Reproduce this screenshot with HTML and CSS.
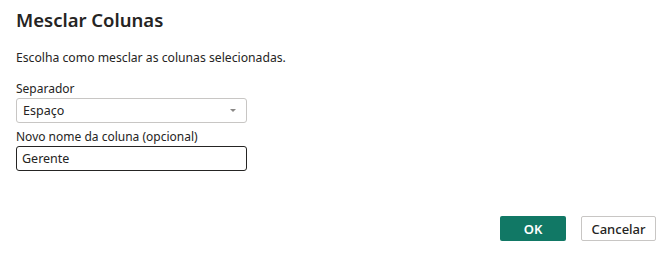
FILE: index.html
```html
<!DOCTYPE html>
<html lang="pt">
<head>
    <meta charset="UTF-8">
    <title>Mesclar Colunas</title>
    <link rel="stylesheet" href="styles.css">
</head>
<body>
    <div class="dialog">
        <h1>Mesclar Colunas</h1>
        <p class="desc">Escolha como mesclar as colunas selecionadas.</p>

        <div class="field">
            <label>Separador</label>
            <div class="select">
                <span>Espaço</span>
                <span class="caret"></span>
            </div>
        </div>

        <div class="field">
            <label>Novo nome da coluna (opcional)</label>
            <div class="input">Gerente</div>
        </div>

        <div class="footer">
            <button class="btn-ok">OK</button>
            <button class="btn-cancel">Cancelar</button>
        </div>
    </div>
</body>
</html>
```

FILE: styles.css
```css
body {
    margin: 0;
    background: #fff;
    font-family: 'Noto Sans', 'Open Sans', sans-serif;
    color: #252423;
}

.dialog {
    width: 660px;
    height: 257px;
    box-sizing: border-box;
    padding: 6px 4px 0 16px;
    display: flex;
    flex-direction: column;
}

h1 {
    margin: 0;
    font-size: 18.5px;
    font-weight: 600;
    line-height: 28px;
    color: #252423;
}

.desc {
    margin: 16px 0 0;
    font-size: 12.2px;
    line-height: 16px;
}

.field {
    display: flex;
    flex-direction: column;
    width: 231px;
}

.field:first-of-type {
    margin-top: 14px;
}

.field + .field {
    margin-top: 5px;
}

.field label {
    font-size: 12px;
    line-height: 17px;
    margin-bottom: 1px;
}

.select, .input {
    height: 25px;
    box-sizing: border-box;
    border-radius: 3px;
    font-size: 12.5px;
    display: flex;
    align-items: center;
}

.select {
    border: 1px solid #c8c6c4;
    padding: 0 10px 0 6px;
    justify-content: space-between;
}

.caret {
    width: 0;
    height: 0;
    border-left: 3px solid transparent;
    border-right: 3px solid transparent;
    border-top: 3px solid #8a8886;
}

.input {
    border: 1px solid #252423;
    padding: 0 5px;
}

.footer {
    margin-top: auto;
    margin-bottom: 16px;
    display: flex;
    justify-content: flex-end;
    gap: 15px;
}

.footer button {
    height: 25px;
    border-radius: 2px;
    font-family: inherit;
    font-size: 13px;
    cursor: pointer;
}

.btn-ok {
    width: 66px;
    background: #117865;
    border: none;
    color: #fff;
    font-weight: 600;
}

.btn-cancel {
    width: 75px;
    background: #fff;
    border: 1px solid #c8c6c4;
    color: #252423;
    font-weight: 500;
}
```
